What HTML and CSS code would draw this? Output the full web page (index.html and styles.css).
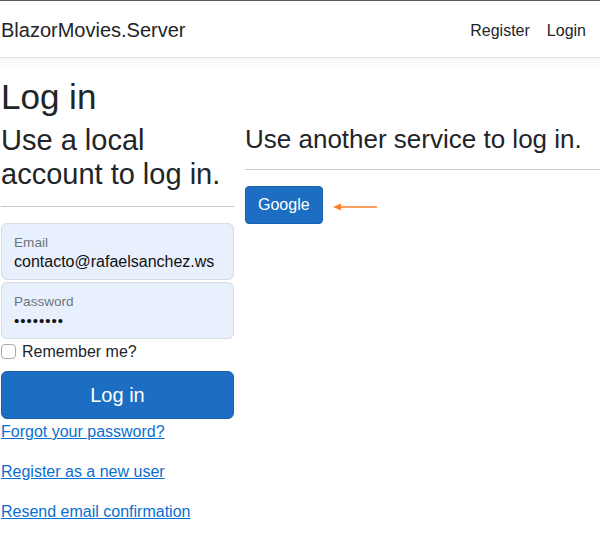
FILE: index.html
```html
<!DOCTYPE html>
<html lang="en">
<head>
<meta charset="utf-8">
<title>Log in</title>
<link rel="stylesheet" href="styles.css">
</head>
<body>
<header class="navbar">
  <a class="brand" href="#">BlazorMovies.Server</a>
  <nav class="nav">
    <a class="nav-link" href="#">Register</a>
    <a class="nav-link" href="#">Login</a>
  </nav>
</header>
<main class="content">
  <h1 class="title">Log in</h1>
  <div class="row">
    <section class="col-left">
      <h2 class="subtitle">Use a local account to log in.</h2>
      <hr class="rule rule-left">
      <div class="field">
        <div class="field-label">Email</div>
        <div class="field-value">contacto@rafaelsanchez.ws</div>
      </div>
      <div class="field field-gap">
        <div class="field-label">Password</div>
        <div class="field-value dots">••••••••</div>
      </div>
      <label class="check">
        <span class="check-box"></span>
        <span>Remember me?</span>
      </label>
      <button class="btn-primary btn-lg" type="button">Log in</button>
      <p class="link-p"><a href="#">Forgot your password?</a></p>
      <p class="link-p"><a href="#">Register as a new user</a></p>
      <p class="link-p"><a href="#">Resend email confirmation</a></p>
    </section>
    <section class="col-right">
      <h3 class="subtitle-sm">Use another service to log in.</h3>
      <hr class="rule rule-right">
      <div class="providers">
        <button class="btn-primary btn-md" type="button">Google</button>
        <svg class="arrow" width="46" height="10" viewBox="0 0 46 10" aria-hidden="true">
          <line x1="6" y1="5" x2="44" y2="5" stroke="#ff7f27" stroke-width="1.4"/>
          <polygon points="0,5 8,1.5 8,8.5" fill="#ff7f27"/>
        </svg>
      </div>
    </section>
  </div>
</main>
</body>
</html>
```
FILE: styles.css
```css
* { box-sizing: border-box; }

html, body {
  margin: 0;
  padding: 0;
  background: #fff;
}

body {
  font-family: "Liberation Sans", Arial, sans-serif;
  color: #212529;
  font-size: 16px;
  line-height: 24px;
}

.navbar {
  display: flex;
  justify-content: space-between;
  align-items: flex-start;
  height: 58px;
  border-top: 1px solid #5a5a5a;
  border-bottom: 1px solid #e2e2e2;
  box-shadow: 0 4px 12px rgba(0, 0, 0, 0.05);
  padding: 0 14px 0 1px;
}

.brand {
  font-size: 20px;
  line-height: 30px;
  margin-top: 14px;
  color: #212529;
  text-decoration: none;
}

.nav {
  display: flex;
  gap: 17px;
  margin-top: 18px;
}

.nav-link {
  color: #212529;
  text-decoration: none;
  font-size: 16px;
  line-height: 24px;
}

.content {
  padding: 18px 0 0 1px;
}

.title {
  margin: 0 0 5px 0;
  font-size: 35px;
  line-height: 42px;
  font-weight: 400;
}

.row {
  display: flex;
  align-items: flex-start;
  gap: 11px;
}

.col-left {
  width: 233px;
  flex: none;
}

.col-right {
  flex: 1;
}

.subtitle {
  margin: 0;
  font-size: 29px;
  line-height: 34px;
  font-weight: 400;
}

.subtitle-sm {
  margin: 1px 0 0 0;
  font-size: 26px;
  line-height: 30px;
  font-weight: 400;
}

.rule {
  border: 0;
  border-top: 1px solid #c8c8c8;
  margin: 0;
}

.rule-left {
  margin-top: 15px;
  margin-bottom: 16px;
}

.rule-right {
  margin-top: 15px;
  margin-bottom: 16px;
}

.field {
  height: 57px;
  border: 1px solid #d6dbe1;
  border-radius: 6px;
  background: #e8f0fe;
  padding: 10px 12px 0 12px;
}

.field-gap {
  margin-top: 2px;
}

.field-label {
  font-size: 13.6px;
  line-height: 18px;
  color: #6c757d;
}

.field-value {
  font-size: 16px;
  line-height: 20px;
  color: #111;
}

.dots {
  letter-spacing: 1px;
  font-size: 15px;
}

.check {
  display: flex;
  align-items: flex-start;
  gap: 6px;
  line-height: 24px;
  margin-top: 1px;
}

.check-box {
  width: 15px;
  height: 15px;
  margin-top: 4px;
  border: 1px solid #a9a9a9;
  border-radius: 4px;
  background: #fff;
  flex: none;
}

.btn-primary {
  display: block;
  font-family: inherit;
  color: #fff;
  background-color: #1b6ec2;
  border: 1px solid #1861ac;
  cursor: pointer;
}

.btn-lg {
  width: 100%;
  margin-top: 7px;
  height: 48px;
  font-size: 20px;
  line-height: 30px;
  padding: 8px 16px;
  border-radius: 6px;
}

.btn-md {
  height: 38px;
  font-size: 16px;
  line-height: 24px;
  padding: 6px 12px;
  border-radius: 4px;
}

.providers {
  display: flex;
  align-items: center;
}

.arrow {
  margin-left: 10px;
  margin-top: 4px;
  display: block;
}

.link-p {
  margin: 0 0 16px 0;
}

.link-p:first-of-type {
  margin-top: 1px;
}

.link-p a {
  color: #0a6fcf;
  text-decoration: underline;
}
```
